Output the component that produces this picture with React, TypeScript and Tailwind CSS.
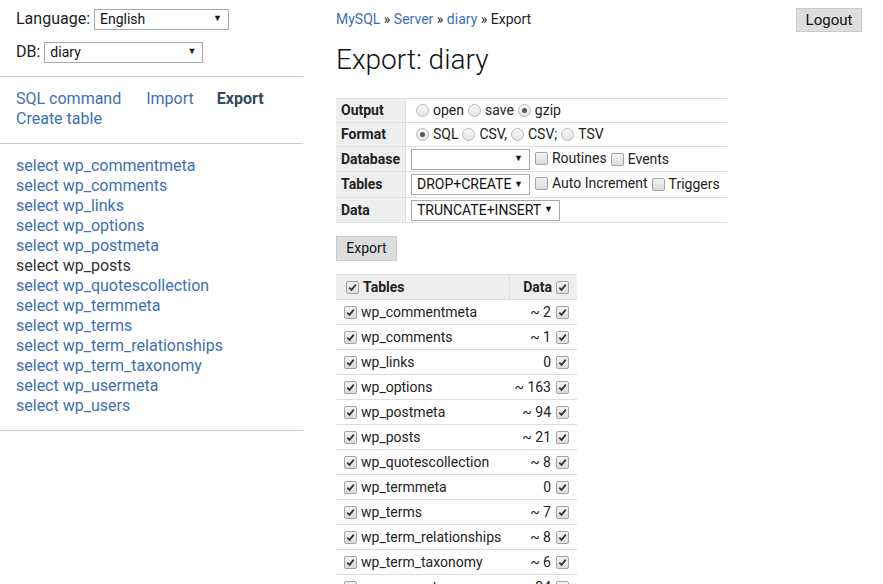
const tables: [string, string][] = [
  ['wp_commentmeta', '~ 2'],
  ['wp_comments', '~ 1'],
  ['wp_links', '0'],
  ['wp_options', '~ 163'],
  ['wp_postmeta', '~ 94'],
  ['wp_posts', '~ 21'],
  ['wp_quotescollection', '~ 8'],
  ['wp_termmeta', '0'],
  ['wp_terms', '~ 7'],
  ['wp_term_relationships', '~ 8'],
  ['wp_term_taxonomy', '~ 6'],
  ['wp_usermeta', '~ 24'],
  ['wp_users', '~ 1'],
];

function Check({ on = true }: { on?: boolean }) {
  return (
    <span className="inline-flex h-[13px] w-[13px] shrink-0 items-center justify-center rounded-[2px] border border-[#a3a3a3] bg-gradient-to-b from-[#f4f4f4] to-[#dcdcdc]">
      {on && (
        <svg width="9" height="9" viewBox="0 0 9 9">
          <path d="M1.3 4.6 L3.5 6.9 L7.8 1.6" fill="none" stroke="#333" strokeWidth="1.7" />
        </svg>
      )}
    </span>
  );
}

function Radio({ on = false }: { on?: boolean }) {
  return (
    <span className="inline-flex h-[13px] w-[13px] shrink-0 items-center justify-center rounded-full border border-[#b8b8b8] bg-gradient-to-b from-[#f8f8f8] to-[#e4e4e4]">
      {on && <span className="h-[5px] w-[5px] rounded-full bg-[#555]" />}
    </span>
  );
}

function Select({ value, w }: { value: string; w: string }) {
  return (
    <span className={`inline-flex h-[21px] shrink-0 items-center justify-between whitespace-nowrap border border-[#a9a9a9] bg-white pl-[5px] pr-[6px] text-[14px] text-[#111] ${w}`}>
      <span>{value}</span>
      <span className="text-[9px]">▼</span>
    </span>
  );
}

function Opt({ children }: { children: React.ReactNode }) {
  return <span className="mr-[4px] inline-flex items-center gap-[4px] whitespace-nowrap">{children}</span>;
}

export default function App() {
  const links = [
    'wp_commentmeta', 'wp_comments', 'wp_links', 'wp_options', 'wp_postmeta', 'wp_posts',
    'wp_quotescollection', 'wp_termmeta', 'wp_terms', 'wp_term_relationships',
    'wp_term_taxonomy', 'wp_usermeta', 'wp_users',
  ];
  return (
    <div className="flex h-[584px] w-[883px] overflow-hidden bg-white font-['Roboto',sans-serif] text-[#222]">
      <div className="w-[303px] shrink-0">
        <div className="border-b border-[#ccc] px-[16px] pb-[14px] pt-[9px] text-[16px]">
          <div className="flex h-[20px] items-center gap-[4px]">
            Language: <Select value="English" w="w-[135px] h-[20px]" />
          </div>
          <div className="mt-[13px] flex h-[20px] items-center gap-[4px]">
            DB: <Select value="diary" w="w-[159px] h-[20px]" />
          </div>
        </div>
        <div className="border-b border-[#ccc] px-[16px] pb-[14px] pt-[12px] text-[16px] leading-[20px] text-[#3d6fb4]">
          <div className="flex">
            <span className="mr-[25px]">SQL command</span>
            <span className="mr-[23px]">Import</span>
            <span className="font-bold text-[#34495e]">Export</span>
          </div>
          <div>Create table</div>
        </div>
        <div className="border-b border-[#ccc] px-[16px] pb-[14px] pt-[12px] text-[16px] leading-[20px] text-[#3d6fb4]">
          {links.map((l) => (
            <div key={l} className={l === 'wp_posts' ? 'text-[#333]' : ''}>select {l}</div>
          ))}
        </div>
      </div>

      <div className="ml-[33px] flex-1 pr-[21px] text-[14px]">
        <div className="flex h-[32px] items-end justify-between">
          <div className="pb-[5px] leading-[16px]">
            <span className="text-[#3d6fb4]">MySQL</span> » <span className="text-[#3d6fb4]">Server</span> »{' '}
            <span className="text-[#3d6fb4]">diary</span> » <span className="text-[#222]">Export</span>
          </div>
          <span className="flex h-[24px] w-[66px] items-center justify-center border border-[#ccc] bg-[#ddd] text-[15px] text-[#111]">
            Logout
          </span>
        </div>
        <h1 className="mt-[11px] text-[28px] font-light leading-[34px] text-[#111]">Export: diary</h1>

        <table className="mt-[21px] w-[390px] border-collapse whitespace-nowrap">
          <tbody>
            {[
              ['Output', 'h-[24px]'],
              ['Format', 'h-[24px]'],
              ['Database', 'h-[25px]'],
              ['Tables', 'h-[26px]'],
              ['Data', 'h-[25px]'],
            ].map(([label, h]) => (
              <tr key={label} className={`${h} border-y border-[#ddd]`}>
                <th className="w-[70px] border-r border-[#ddd] bg-[#eee] px-[5px] text-left font-bold">{label}</th>
                <td className="pl-[5px] pr-[3px]">
                  <div className="flex items-center">
                    {label === 'Output' && (
                      <span className="ml-[5px] flex items-center">
                        <Opt><Radio /> open</Opt>
                        <Opt><Radio /> save</Opt>
                        <Opt><Radio on /> gzip</Opt>
                      </span>
                    )}
                    {label === 'Format' && (
                      <span className="ml-[5px] flex items-center">
                        <Opt><Radio on /> SQL</Opt>
                        <Opt><Radio /> CSV,</Opt>
                        <Opt><Radio /> CSV;</Opt>
                        <Opt><Radio /> TSV</Opt>
                      </span>
                    )}
                    {label === 'Database' && (
                      <>
                        <Select value="" w="w-[119px]" />
                        <span className="ml-[5px]"><Opt><Check on={false} /> Routines</Opt></span>
                        <Opt><Check on={false} /> Events</Opt>
                      </>
                    )}
                    {label === 'Tables' && (
                      <>
                        <Select value="DROP+CREATE" w="w-[119px]" />
                        <span className="ml-[5px]"><Opt><Check on={false} /> Auto Increment</Opt></span>
                        <Opt><Check on={false} /> Triggers</Opt>
                      </>
                    )}
                    {label === 'Data' && <Select value="TRUNCATE+INSERT" w="w-[149px]" />}
                  </div>
                </td>
              </tr>
            ))}
          </tbody>
        </table>

        <span className="mt-[13px] flex h-[25px] w-[61px] items-center justify-center border border-[#ccc] bg-[#ddd] text-[14px] text-[#111]">
          Export
        </span>

        <table className="mt-[13px] w-[241px] border-collapse whitespace-nowrap">
          <thead>
            <tr className="h-[25px] border-y border-[#ddd] bg-[#eee]">
              <th className="pl-[10px] text-left font-bold">
                <span className="flex items-center gap-[4px]"><Check /> Tables</span>
              </th>
              <th className="w-[68px] border-l border-[#ddd] pr-[8px] text-right font-bold">
                <span className="flex items-center justify-end gap-[4px]">Data <Check /></span>
              </th>
            </tr>
          </thead>
          <tbody>
            {tables.map(([name, n]) => (
              <tr key={name} className="h-[25px] border-b border-[#ddd]">
                <td className="pl-[8px]">
                  <span className="flex items-center gap-[4px]"><Check /> {name}</span>
                </td>
                <td className="pr-[8px]">
                  <span className="flex items-center justify-end gap-[5px]">{n} <Check /></span>
                </td>
              </tr>
            ))}
          </tbody>
        </table>
      </div>
    </div>
  );
}
